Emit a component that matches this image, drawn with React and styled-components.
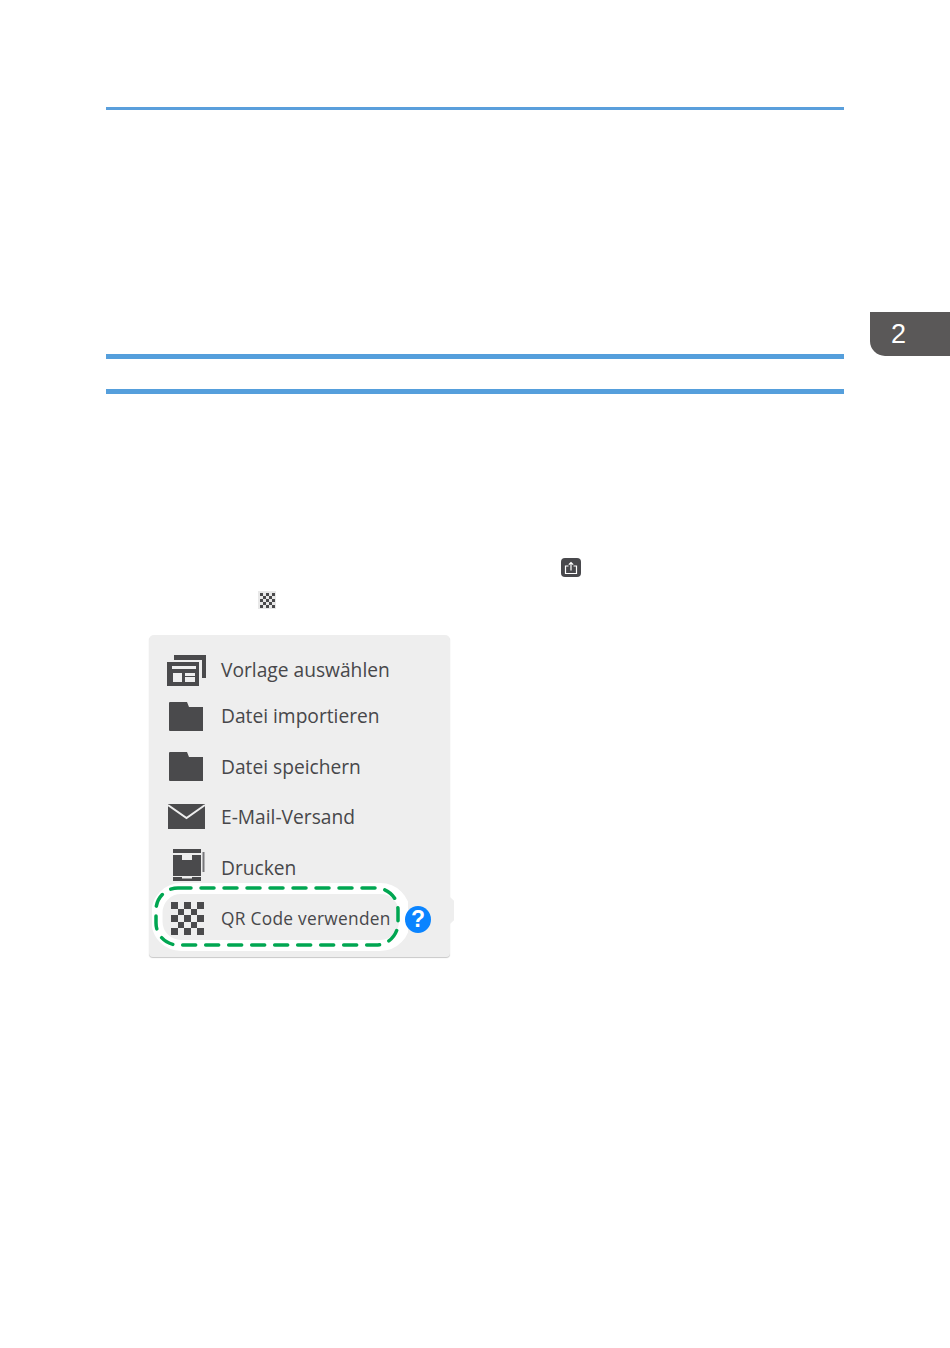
import styled, { createGlobalStyle } from 'styled-components';

const GlobalStyle = createGlobalStyle`
  html, body {
    margin: 0;
    padding: 0;
    background: #fff;
  }
  body {
    font-family: 'Open Sans', 'Liberation Sans', sans-serif;
  }
`;

const QR_CELLS = [
  [0, 0], [2, 0], [4, 0],
  [1, 1], [3, 1],
  [0, 2], [2, 2], [4, 2],
  [1, 3], [3, 3],
  [0, 4], [2, 4], [4, 4],
];

function TemplateIcon() {
  return (
    <svg width='40' height='32' viewBox='0 0 40 32'>
      <path d='M7 0h32v23h-4V5H7z' fill='#4a4a4c' />
      <rect x='0' y='7' width='32' height='24' fill='#4a4a4c' />
      <rect x='5' y='11' width='24' height='3' fill='#eee' />
      <rect x='6' y='18' width='9' height='9' fill='#eee' />
      <rect x='18' y='18' width='10' height='3' fill='#eee' />
      <rect x='18' y='22' width='10' height='5' fill='#eee' />
    </svg>
  );
}

function FolderIcon() {
  return (
    <svg width='36' height='29' viewBox='0 0 36 29'>
      <path d='M1 0h17l2 5h14v24H1a1 1 0 0 1-1-1V1a1 1 0 0 1 1-1z' fill='#4a4a4c' />
    </svg>
  );
}

function MailIcon() {
  return (
    <svg width='38' height='25' viewBox='0 0 38 25'>
      <rect width='37' height='25' fill='#4a4a4c' />
      <path d='M0 1l18.500 13L37 1' fill='none' stroke='#eee' strokeWidth='2' />
    </svg>
  );
}

function PrintIcon() {
  return (
    <svg width='40' height='36' viewBox='0 0 40 36'>
      <rect x='6' y='0' width='28' height='4' fill='#4a4a4c' />
      <path d='M6 6h9v5h10V6h9v21H6z' fill='#4a4a4c' />
      <rect x='35.500' y='3' width='2' height='20' fill='#77777a' />
      <path d='M6 28h9v1.500h10V28h9v4H6z' fill='#4a4a4c' />
    </svg>
  );
}

function QrIcon({ size = 33, color = '#4a4a4c' }) {
  return (
    <svg width={size} height={size} viewBox='0 0 5 5' shapeRendering='crispEdges'>
      {QR_CELLS.map(([x, y]) => (
        <rect key={`${x}-${y}`} x={x} y={y} width='1' height='1' fill={color} />
      ))}
    </svg>
  );
}

function HighlightFrame() {
  return (
    <Frame width='256' height='72' viewBox='0 0 256 72'>
      <rect x='5' y='6.500' width='247.500' height='57' rx='24' fill='none' stroke='#fff' strokeWidth='11' />
      <rect
        x='4'
        y='6'
        width='242'
        height='57'
        rx='22'
        fill='none'
        stroke='#00a651'
        strokeWidth='3.500'
        strokeDasharray='13 10'
        strokeLinecap='round'
      />
    </Frame>
  );
}

function App() {
  return (
    <Page>
      <GlobalStyle />
      <ChapterTab>2</ChapterTab>
      <HeaderRule />
      <SectionRule $top={244} />
      <SectionRule $top={30} />

      <InlineIcons>
        <IconLine $indent={455}>
          <ShareChip>
            <svg width='14' height='14' viewBox='0 0 14 14' fill='none' stroke='#fff' strokeWidth='1.200'>
              <path d='M4.500 5H1.500v7.500h11V5h-3' />
              <path d='M7 9.500V1.500M4.800 3.700 7 1.500l2.200 2.200' />
            </svg>
          </ShareChip>
        </IconLine>
        <IconLine $indent={152}>
          <QrChip>
            <QrIcon size={15} />
          </QrChip>
        </IconLine>
      </InlineIcons>

      <Menu>
        <MenuRow>
          <IconSlot $nudge={2}><TemplateIcon /></IconSlot>
          <Label $nudge={-2}>Vorlage auswählen</Label>
        </MenuRow>
        <MenuRow>
          <IconSlot><FolderIcon /></IconSlot>
          <Label $nudge={-2}>Datei importieren</Label>
        </MenuRow>
        <MenuRow $spaced={4}>
          <IconSlot><FolderIcon /></IconSlot>
          <Label>Datei speichern</Label>
        </MenuRow>
        <MenuRow $spaced={4}>
          <IconSlot><MailIcon /></IconSlot>
          <Label>E-Mail-Versand</Label>
        </MenuRow>
        <MenuRow $spaced={4}>
          <IconSlot $nudge={2}><PrintIcon /></IconSlot>
          <Label $nudge={2}>Drucken</Label>
        </MenuRow>
        <MenuRow $spaced={5}>
          <HighlightFrame />
          <IconSlot $nudge={2}><QrIcon /></IconSlot>
          <Label $small $nudge={2}>QR Code verwenden</Label>
          <HelpBadge>?</HelpBadge>
          <SideNub />
        </MenuRow>
      </Menu>
    </Page>
  );
}

const Page = styled.div`
  position: relative;
  box-sizing: border-box;
  width: 950px;
  height: 1348px;
  padding: 107px 106px 0;
  background: #fff;
  overflow: hidden;
`;

const ChapterTab = styled.div`
  position: absolute;
  top: 312px;
  right: 0;
  box-sizing: border-box;
  width: 80px;
  height: 44px;
  padding-left: 21px;
  background: #5a5858;
  border-bottom-left-radius: 15px;
  color: #fff;
  font-family: 'Liberation Sans', sans-serif;
  font-size: 27px;
  line-height: 44px;
`;

const HeaderRule = styled.div`
  height: 3px;
  background: #5a9fdc;
`;

const SectionRule = styled.div`
  height: 5px;
  margin-top: ${(p) => p.$top}px;
  background: #559fdc;
`;

const InlineIcons = styled.div`
  display: flex;
  flex-direction: column;
  gap: 14px;
  padding-top: 164px;
`;

const IconLine = styled.div`
  display: flex;
  padding-left: ${(p) => p.$indent}px;
`;

const ShareChip = styled.div`
  display: flex;
  align-items: center;
  justify-content: center;
  width: 20px;
  height: 19px;
  background: #48484c;
  border-radius: 4px;
`;

const QrChip = styled.div`
  display: flex;
  align-items: center;
  justify-content: center;
  width: 18px;
  height: 18px;
  background: #e8e8e8;
`;

const Menu = styled.div`
  box-sizing: border-box;
  display: flex;
  flex-direction: column;
  width: 301px;
  height: 322px;
  margin: 26px 0 0 43px;
  padding: 12px 0 16px 18px;
  background: #eee;
  border-radius: 5px 5px 4px 4px;
  box-shadow: 0 1px 1px rgba(0, 0, 0, 0.22);
`;

const MenuRow = styled.div`
  position: relative;
  display: flex;
  align-items: center;
  gap: 14px;
  height: 46px;
  margin-top: ${(p) => p.$spaced || 0}px;
  color: #47474a;
`;

const IconSlot = styled.div`
  position: relative;
  display: flex;
  align-items: center;
  justify-content: center;
  flex: none;
  width: 40px;
  margin-top: ${(p) => p.$nudge || 0}px;
`;

const Label = styled.span`
  position: relative;
  margin-top: ${(p) => p.$nudge || 0}px;
  font-size: ${(p) => (p.$small ? 17.3 : 19.2)}px;
  letter-spacing: ${(p) => (p.$small ? 0.3 : 0)}px;
  white-space: nowrap;
`;

const Frame = styled.svg`
  position: absolute;
  left: -15px;
  top: -12px;
`;

const HelpBadge = styled.div`
  position: absolute;
  left: 238px;
  top: 12px;
  width: 26px;
  height: 27px;
  border-radius: 50%;
  background: #0a84ff;
  color: #fff;
  font-family: 'Liberation Sans', sans-serif;
  font-size: 23px;
  font-weight: 700;
  line-height: 27px;
  text-align: center;
`;

const SideNub = styled.div`
  position: absolute;
  left: 283px;
  top: 3px;
  width: 4px;
  height: 27px;
  background: #eee;
  clip-path: polygon(0 0, 100% 14%, 100% 86%, 0 100%);
`;

export default App;
